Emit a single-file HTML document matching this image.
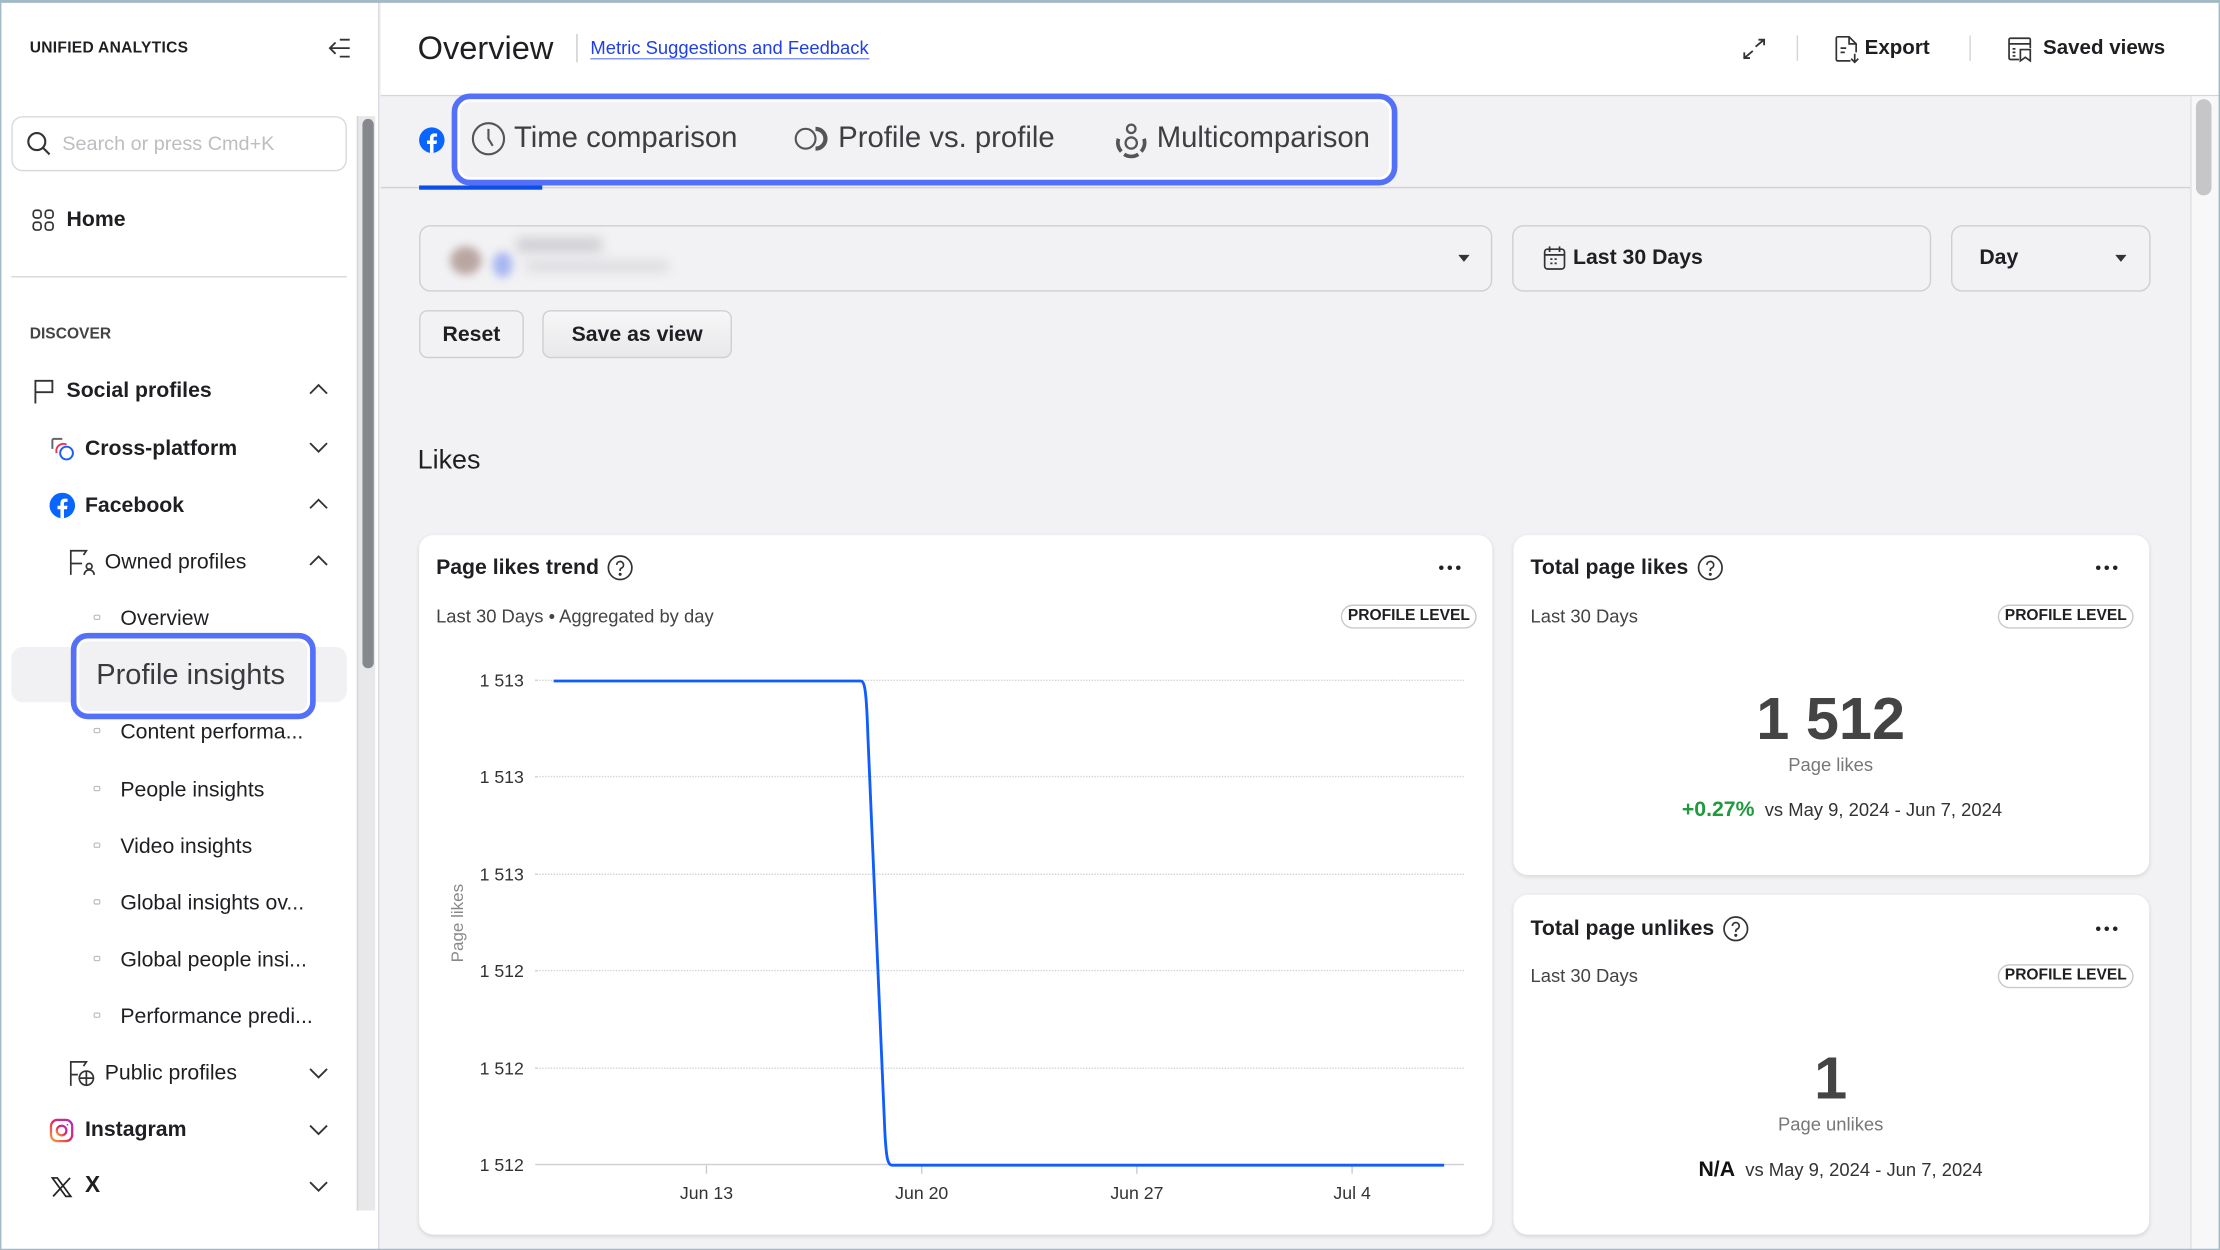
<!DOCTYPE html>
<html><head><meta charset="utf-8"><style>
*{box-sizing:border-box;margin:0;padding:0}
html,body{width:2220px;height:1250px;overflow:hidden;background:#fff;font-family:"Liberation Sans",sans-serif;color:#1f1f23}
#w{position:absolute;left:0;top:0;width:1568px;height:883px;transform:scale(1.41582);transform-origin:0 0;background:#f2f2f4;overflow:hidden}
.a{position:absolute;white-space:nowrap}
.vc{transform:translateY(-50%)}
.b{font-weight:700}
svg{position:absolute;overflow:visible}
.side .it{position:absolute;font-size:15px;transform:translateY(-50%)}
.card{position:absolute;background:#fff;border-radius:10px;box-shadow:0 1px 3px rgba(0,0,0,.12)}
.pill{position:absolute;border:1px solid #c9c9cc;border-radius:9px;font-size:11px;font-weight:700;padding:1px 4px;line-height:13px}
.ttl{font-size:15px;font-weight:700}
.sub{font-size:13px;color:#444}
.btn{position:absolute;border:1px solid #cfcfd3;border-radius:6px;font-size:15px;font-weight:700;display:flex;align-items:center;justify-content:center}
.yl{position:absolute;font-size:12.5px;color:#333;right:1198px;transform:translateY(-50%)}
.xl{position:absolute;font-size:12.5px;color:#333;transform:translate(-50%,-50%)}
.grid{position:absolute;left:378px;width:656px;border-top:1.5px dotted #d4d4d8}
.tab{font-size:20.7px;color:#3e3e42}
</style></head><body><div id="w">
<!-- sidebar -->
<div class="a side" style="left:0;top:0;width:268px;height:883px;background:#fff;border-right:1px solid #dcdce0">
 <div class="a b vc" style="left:21px;top:34px;font-size:11px;letter-spacing:.2px">UNIFIED ANALYTICS</div>
 <svg style="left:232px;top:27px" width="16" height="14" fill="none" stroke="#333" stroke-width="1.3"><path d="M1 7h14M5 3 1 7l4 4M8 1h7M8 13h7"/></svg>
 <div class="a" style="left:8px;top:82px;width:237px;height:39px;border:1px solid #d9d9dd;border-radius:8px"></div>
 <svg style="left:19px;top:93px" width="17" height="17" fill="none" stroke="#333" stroke-width="1.5"><circle cx="7" cy="7" r="6"/><path d="M11.5 11.5 16 16"/></svg>
 <div class="a vc" style="left:44px;top:101px;font-size:14px;color:#bdbdc2">Search or press Cmd+K</div>
 <svg style="left:23px;top:148px" width="15" height="15" fill="none" stroke="#333" stroke-width="1.2"><rect x=".5" y=".5" width="5.5" height="5.5" rx="2"/><rect x="9" y=".5" width="5.5" height="5.5" rx="2"/><rect x=".5" y="9" width="5.5" height="5.5" rx="2"/><rect x="9" y="9" width="5.5" height="5.5" rx="2"/></svg>
 <div class="it b" style="left:47px;top:155px">Home</div>
 <div class="a" style="left:8px;top:195px;width:237px;border-top:1.5px solid #d8d8dc"></div>
 <div class="a b vc" style="left:21px;top:236px;font-size:11px;color:#444">DISCOVER</div>
 <svg style="left:24px;top:268px" width="14" height="17" fill="none" stroke="#333" stroke-width="1.3"><path d="M1 17V1h12v8H1"/></svg>
 <div class="it b" style="left:47px;top:276px">Social profiles</div>
 <svg style="left:36px;top:309px" width="17" height="17" fill="none" stroke-width="1.4"><path d="M1 8V2a1 1 0 0 1 1-1h6" stroke="#666"/><path d="M4 11a5 5 0 0 1 7-6" stroke="#e8355a"/><circle cx="11" cy="11" r="4.5" stroke="#1b5ef0"/></svg>
 <div class="it b" style="left:60px;top:317px">Cross-platform</div>
 <svg style="left:35px;top:348px" width="18" height="18"><circle cx="9" cy="9" r="9" fill="#0866ff"/><path d="M10.2 18v-6.3h2.1l.35-2.5h-2.45V7.7c0-.7.2-1.2 1.2-1.2h1.3V4.3a17 17 0 0 0-1.9-.1c-1.9 0-3.1 1.1-3.1 3.2v1.8H5.6v2.5h2.1V18z" fill="#fff"/></svg>
 <div class="it b" style="left:60px;top:357px">Facebook</div>
 <svg style="left:49px;top:388px" width="18" height="18" fill="none" stroke="#333" stroke-width="1.2"><path d="M1 18V1h11l-2 3M1 10h8"/><circle cx="14" cy="12" r="2"/><path d="M10.5 18a3.5 3.5 0 0 1 7 0"/></svg>
 <div class="it" style="left:74px;top:397px">Owned profiles</div>
 <div class="a" style="left:8px;top:457px;width:237px;height:39px;background:#f1f1f3;border-radius:8px"></div>
 <div class="a" style="left:50px;top:447px;width:173px;height:61px;border:4px solid #5570f8;border-radius:12px;background:#f1f1f3;box-shadow:inset 0 0 0 2px #fff"></div>
 <div class="a vc" style="left:68px;top:477px;font-size:20.5px;color:#3a3a3e">Profile insights</div>
 <div class="it" style="left:85px;top:437px">Overview</div>
 <div class="it" style="left:85px;top:517px">Content performa...</div>
 <div class="it" style="left:85px;top:558px">People insights</div>
 <div class="it" style="left:85px;top:598px">Video insights</div>
 <div class="it" style="left:85px;top:638px">Global insights ov...</div>
 <div class="it" style="left:85px;top:678px">Global people insi...</div>
 <div class="it" style="left:85px;top:718px">Performance predi...</div>
 <svg style="left:66px;top:434px" width="6" height="330" fill="none" stroke="#bbb" stroke-width=".8"><rect x=".5" y=".5" width="4" height="3" rx="1"/><rect x=".5" y="80.5" width="4" height="3" rx="1"/><rect x=".5" y="121.5" width="4" height="3" rx="1"/><rect x=".5" y="161.5" width="4" height="3" rx="1"/><rect x=".5" y="201.5" width="4" height="3" rx="1"/><rect x=".5" y="241.5" width="4" height="3" rx="1"/><rect x=".5" y="281.5" width="4" height="3" rx="1"/></svg>
 <svg style="left:49px;top:749px" width="18" height="18" fill="none" stroke="#333" stroke-width="1.2"><path d="M1 18V1h11l-2 3M1 10h5"/><circle cx="12" cy="12.5" r="5"/><path d="M7 12.5h10M12 7.5v10"/></svg>
 <div class="it" style="left:74px;top:758px">Public profiles</div>
 <svg style="left:35px;top:790px" width="17" height="17" fill="none" stroke-width="1.6"><defs><linearGradient id="ig" x1="0" y1="1" x2="1" y2="0"><stop offset="0" stop-color="#f9a134"/><stop offset=".5" stop-color="#e4245f"/><stop offset="1" stop-color="#b02fc5"/></linearGradient></defs><rect x="1" y="1" width="15" height="15" rx="4.5" stroke="url(#ig)"/><circle cx="8.5" cy="8.5" r="3.4" stroke="url(#ig)"/><circle cx="12.6" cy="4.4" r=".6" fill="#c32aa3" stroke="none"/></svg>
 <div class="it b" style="left:60px;top:798px">Instagram</div>
 <svg style="left:36px;top:831px" width="15" height="15" fill="none" stroke="#222" stroke-width="1.2"><path d="M1 1h3.5L14 14h-3.5zM13.5 1 1.5 14"/></svg>
 <div class="it b" style="left:60px;top:838px;font-size:16px">X</div>
 <svg style="left:218px;top:270px" width="14" height="580" fill="none" stroke="#333" stroke-width="1.3"><path d="M1 8 7 2l6 6"/><path d="M1 43l6 6 6-6"/><path d="M1 89l6-6 6 6"/><path d="M1 129l6-6 6 6"/><path d="M1 485l6 6 6-6"/><path d="M1 525l6 6 6-6"/><path d="M1 565l6 6 6-6"/></svg>
 <div class="a" style="left:252px;top:82px;width:13px;height:773px;background:#e8e8ea;border-left:1px solid #d5d5d8"></div>
 <div class="a" style="left:256px;top:84px;width:8px;height:388px;background:#85888d;border-radius:4px"></div>
</div>
<!-- header -->
<div class="a" style="left:269px;top:0;width:1299px;height:68px;background:#fff;border-bottom:1px solid #d6d6da"></div>
<div class="a vc" style="left:295px;top:34px;font-size:23px;color:#1f1f23">Overview</div>
<div class="a" style="left:407px;top:24px;height:20px;border-left:1px solid #ccc"></div>
<div class="a vc" style="left:417px;top:34px;font-size:13px;color:#1f3fe8;border-bottom:1px solid #7f93f3;line-height:15px">Metric Suggestions and Feedback</div>
<svg style="left:1231px;top:27px" width="16" height="15" fill="none" stroke="#333" stroke-width="1.3"><path d="M9 6l6-5M11 1h4v4M7 9l-6 5M1 10v4h4"/></svg>
<div class="a" style="left:1269px;top:25px;height:18px;border-left:1px solid #d5d5d8"></div>
<svg style="left:1296px;top:25px" width="18" height="20" fill="none" stroke="#333" stroke-width="1.2"><path d="M11 18H2a1 1 0 0 1-1-1V2a1 1 0 0 1 1-1h8l5 5v6M10 1v5h5M4 9h4M4 12h3M14 13v6M11.5 16.5 14 19l2.5-2.5"/></svg>
<div class="a b vc" style="left:1317px;top:34px;font-size:14.5px">Export</div>
<div class="a" style="left:1391px;top:25px;height:18px;border-left:1px solid #d5d5d8"></div>
<svg style="left:1418px;top:26px" width="17" height="17" fill="none" stroke="#333" stroke-width="1.2"><path d="M8 16H2a1 1 0 0 1-1-1V2a1 1 0 0 1 1-1h13a1 1 0 0 1 1 1v6M1 5h15M3.5 8.5h2M3.5 11h2M3.5 13.5h2M9 9h7v8l-3.5-2.5L9 17z"/></svg>
<div class="a b vc" style="left:1443px;top:34px;font-size:14.5px">Saved views</div>
<!-- right scrollbar -->
<div class="a" style="left:1547px;top:68px;width:21px;height:815px;background:#f8f8f8;border-left:1px solid #e0e0e3"></div>
<div class="a" style="left:1551px;top:70px;width:11px;height:68px;background:#c6c6c9;border-radius:6px"></div>
<!-- tabs -->
<div class="a" style="left:269px;top:132px;width:1278px;border-top:1.5px solid #d2d2d6"></div>
<div class="a" style="left:296px;top:131px;width:87px;height:3px;background:#0a4fe6"></div>
<svg style="left:296px;top:90px" width="18" height="18"><circle cx="9" cy="9" r="9" fill="#0866ff"/><path d="M10.2 18v-6.3h2.1l.35-2.5h-2.45V7.7c0-.7.2-1.2 1.2-1.2h1.3V4.3a17 17 0 0 0-1.9-.1c-1.9 0-3.1 1.1-3.1 3.2v1.8H5.6v2.5h2.1V18z" fill="#fff"/></svg>
<div class="a" style="left:319px;top:66px;width:668px;height:65px;border:4px solid #5570f8;border-radius:13px;box-shadow:inset 0 0 0 2px #fff"></div>
<svg style="left:333px;top:86px" width="24" height="24" fill="none" stroke="#555" stroke-width="1.5"><circle cx="12" cy="12" r="11"/><path d="M12 5v7l3 5"/></svg>
<div class="a vc tab" style="left:363px;top:98px">Time comparison</div>
<svg style="left:561px;top:89px" width="26" height="18" fill="none" stroke="#555" stroke-width="1.5"><circle cx="8" cy="9" r="7"/><path d="M15 2a7 7 0 0 1 0 14" stroke-width="3"/></svg>
<div class="a vc tab" style="left:592px;top:98px">Profile vs. profile</div>
<svg style="left:786px;top:86px" width="26" height="25" fill="none" stroke="#555" stroke-width="1.6"><circle cx="13" cy="5" r="3"/><circle cx="13" cy="15" r="4"/><path d="M4 12a9 9 0 0 0 2 9M22 12a9 9 0 0 1-2 9M8 23a9 9 0 0 0 10 0" stroke-width="2.6"/></svg>
<div class="a vc tab" style="left:817px;top:98px">Multicomparison</div>
<!-- filters -->
<div class="a" style="left:296px;top:159px;width:758px;height:47px;border:1px solid #cfcfd3;border-radius:8px"></div>
<div class="a" style="left:318px;top:174px;width:22px;height:20px;border-radius:50%;background:#b9a6a2;filter:blur(3px)"></div>
<div class="a" style="left:348px;top:178px;width:14px;height:18px;border-radius:50%;background:#a8b6f2;filter:blur(3px)"></div>
<div class="a" style="left:365px;top:168px;width:60px;height:10px;background:#cfcfd3;filter:blur(4px)"></div>
<div class="a" style="left:372px;top:184px;width:100px;height:8px;background:#dcdce0;filter:blur(4px)"></div>
<svg style="left:1030px;top:180px" width="8" height="6"><path d="M0 0h8L4 5z" fill="#333"/></svg>
<div class="a" style="left:1068px;top:159px;width:296px;height:47px;border:1px solid #cfcfd3;border-radius:8px"></div>
<svg style="left:1090px;top:173px" width="16" height="18" fill="none" stroke="#333" stroke-width="1.2"><rect x="1" y="3" width="14" height="14" rx="2"/><path d="M1 7h14M4.5 1v4M11.5 1v4M5 10h1.5M8 10h1.5M5 13h1.5M8 13h1.5"/></svg>
<div class="a b vc" style="left:1111px;top:182px;font-size:15px">Last 30 Days</div>
<div class="a" style="left:1378px;top:159px;width:141px;height:47px;border:1px solid #cfcfd3;border-radius:8px"></div>
<div class="a b vc" style="left:1398px;top:182px;font-size:15px">Day</div>
<svg style="left:1494px;top:180px" width="8" height="6"><path d="M0 0h8L4 5z" fill="#333"/></svg>
<div class="btn" style="left:296px;top:219px;width:74px;height:34px">Reset</div>
<div class="btn" style="left:383px;top:219px;width:134px;height:34px;background:linear-gradient(#f6f6f7,#e9e9eb)">Save as view</div>
<div class="a vc" style="left:295px;top:326px;font-size:19px">Likes</div>
<!-- card 1 -->
<div class="card" style="left:296px;top:378px;width:758px;height:494px"></div>
<div class="a ttl vc" style="left:308px;top:401px">Page likes trend</div>
<svg style="left:429px;top:392px" width="18" height="18" fill="none" stroke="#333" stroke-width="1.2"><circle cx="9" cy="9" r="8.3"/><path d="M6.6 7a2.4 2.4 0 1 1 3.4 2.2c-.7.3-1 .8-1 1.5v.6"/><circle cx="9" cy="13.6" r=".5" fill="#333"/></svg>
<svg style="left:1016px;top:399px" width="16" height="4" fill="#222"><circle cx="2" cy="2" r="1.6"/><circle cx="8" cy="2" r="1.6"/><circle cx="14" cy="2" r="1.6"/></svg>
<div class="a sub vc" style="left:308px;top:435px">Last 30 Days • Aggregated by day</div>
<div class="pill" style="left:947px;top:427px">PROFILE LEVEL</div>
<div class="grid" style="top:480px"></div><div class="grid" style="top:548px"></div><div class="grid" style="top:617px"></div><div class="grid" style="top:685px"></div><div class="grid" style="top:754px"></div>
<div class="a" style="left:378px;top:822px;width:656px;border-top:1.5px solid #d0d0d4"></div>
<div class="yl" style="top:481px">1 513</div><div class="yl" style="top:549px">1 513</div><div class="yl" style="top:618px">1 513</div><div class="yl" style="top:686px">1 512</div><div class="yl" style="top:755px">1 512</div><div class="yl" style="top:823px">1 512</div>
<div class="a" style="left:314px;top:652px;font-size:12px;color:#888;transform:translate(0,-50%) rotate(-90deg);transform-origin:center;width:18px;text-align:center;display:flex;justify-content:center"><span style="white-space:nowrap">Page likes</span></div>
<svg style="left:0;top:0" width="1100" height="883" fill="none"><path d="M499 823v6M651 823v6M803 823v6M955 823v6" stroke="#ccc" stroke-width="1"/><path d="M391 481H608C611 481 612 490 613 520L625 800C626 818 627 823 630 823H1020" stroke="#0f5cff" stroke-width="2"/></svg>
<div class="xl" style="left:499px;top:843px">Jun 13</div><div class="xl" style="left:651px;top:843px">Jun 20</div><div class="xl" style="left:803px;top:843px">Jun 27</div><div class="xl" style="left:955px;top:843px">Jul 4</div>
<!-- card 2 -->
<div class="card" style="left:1069px;top:378px;width:449px;height:240px"></div>
<div class="a ttl vc" style="left:1081px;top:401px">Total page likes</div>
<svg style="left:1199px;top:392px" width="18" height="18" fill="none" stroke="#333" stroke-width="1.2"><circle cx="9" cy="9" r="8.3"/><path d="M6.6 7a2.4 2.4 0 1 1 3.4 2.2c-.7.3-1 .8-1 1.5v.6"/><circle cx="9" cy="13.6" r=".5" fill="#333"/></svg>
<svg style="left:1480px;top:399px" width="16" height="4" fill="#222"><circle cx="2" cy="2" r="1.6"/><circle cx="8" cy="2" r="1.6"/><circle cx="14" cy="2" r="1.6"/></svg>
<div class="a sub vc" style="left:1081px;top:435px">Last 30 Days</div>
<div class="pill" style="left:1411px;top:427px">PROFILE LEVEL</div>
<div class="a b" style="left:1293px;top:508px;font-size:42px;color:#444;transform:translate(-50%,-50%)">1 512</div>
<div class="a" style="left:1293px;top:540px;font-size:13px;color:#777;transform:translate(-50%,-50%)">Page likes</div>
<div class="a" style="left:1301px;top:572px;font-size:13px;color:#333;transform:translate(-50%,-50%)"><b style="color:#1f9a3c;font-size:15px">+0.27%</b>&nbsp; vs May 9, 2024 - Jun 7, 2024</div>
<!-- card 3 -->
<div class="card" style="left:1069px;top:632px;width:449px;height:240px"></div>
<div class="a ttl vc" style="left:1081px;top:656px">Total page unlikes</div>
<svg style="left:1217px;top:647px" width="18" height="18" fill="none" stroke="#333" stroke-width="1.2"><circle cx="9" cy="9" r="8.3"/><path d="M6.6 7a2.4 2.4 0 1 1 3.4 2.2c-.7.3-1 .8-1 1.5v.6"/><circle cx="9" cy="13.6" r=".5" fill="#333"/></svg>
<svg style="left:1480px;top:654px" width="16" height="4" fill="#222"><circle cx="2" cy="2" r="1.6"/><circle cx="8" cy="2" r="1.6"/><circle cx="14" cy="2" r="1.6"/></svg>
<div class="a sub vc" style="left:1081px;top:689px">Last 30 Days</div>
<div class="pill" style="left:1411px;top:681px">PROFILE LEVEL</div>
<div class="a b" style="left:1293px;top:762px;font-size:42px;color:#444;transform:translate(-50%,-50%)">1</div>
<div class="a" style="left:1293px;top:794px;font-size:13px;color:#777;transform:translate(-50%,-50%)">Page unlikes</div>
<div class="a" style="left:1300px;top:826px;font-size:13px;color:#333;transform:translate(-50%,-50%)"><b style="color:#111;font-size:15px">N/A</b>&nbsp; vs May 9, 2024 - Jun 7, 2024</div>
<!-- frame -->
<div class="a" style="left:0;top:0;width:1568px;height:883px;border:1.5px solid #a3bac6;border-top-width:2px;pointer-events:none"></div>
</div></body></html>
